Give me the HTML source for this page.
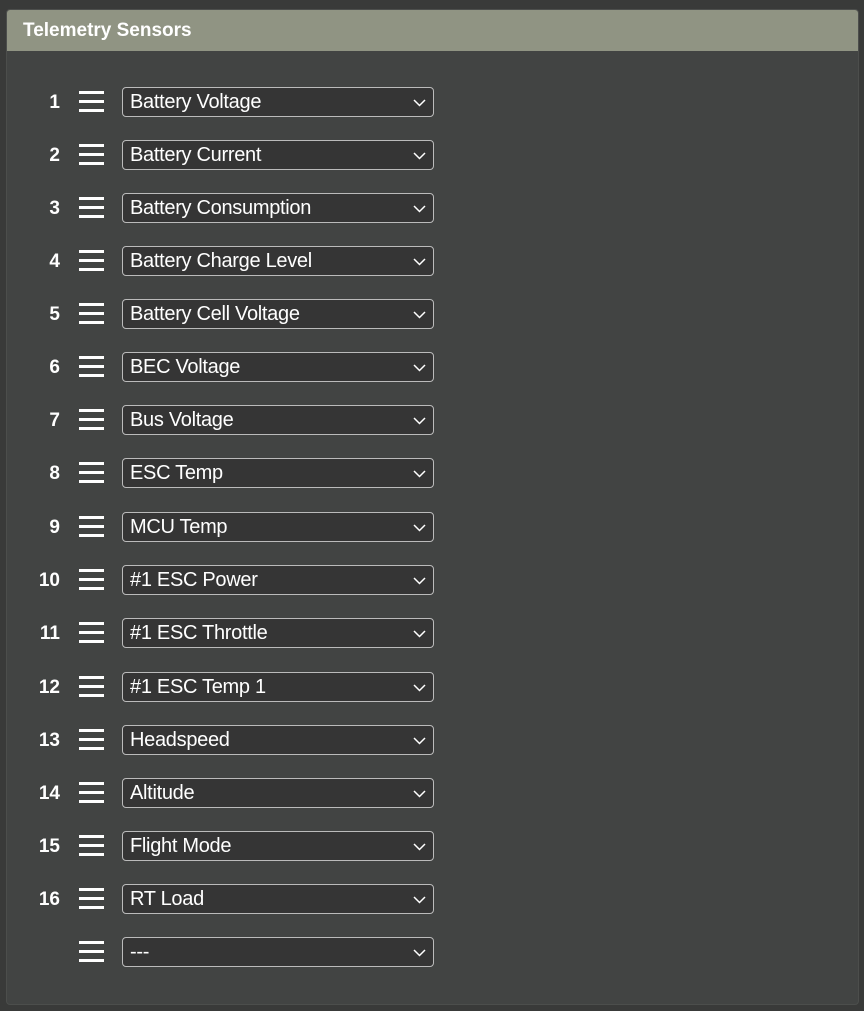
<!DOCTYPE html>
<html><head><style>
html,body{margin:0;padding:0;background:#393a39;width:864px;height:1011px;overflow:hidden;font-family:"Liberation Sans",sans-serif}
.panel{position:absolute;left:6px;top:9px;width:851px;height:994px;background:#424443;border:1px solid #4c4e4c;border-radius:4px;overflow:hidden}
.hdr{height:41px;background:#909483;color:#fff;font-weight:bold;font-size:19px;line-height:41px;padding-left:16px}
.row{position:absolute;left:0;height:30px}
.num{position:absolute;left:0;top:1px;width:53px;text-align:right;color:#fff;font-weight:bold;font-size:19px;line-height:30px}
.ham{position:absolute;left:72px;top:4px;width:25px;height:22px}
.ham i{position:absolute;left:0;width:25px;height:3px;background:#fff}
.sel{position:absolute;left:115px;top:0;width:303px;height:28px;background:#353535;border:1.5px solid #bbb;border-radius:4px;color:#fff;font-size:20px;line-height:29px;padding-left:7px;box-sizing:content-box;letter-spacing:-0.3px}
.sel svg{position:absolute;right:7px;top:11px}
</style></head><body>
<div class="panel"><div class="hdr">Telemetry Sensors</div>
<div class="row" style="top:77px"><div class="num">1</div><div class="ham"><i style="top:0"></i><i style="top:9px"></i><i style="top:18px"></i></div><div class="sel">Battery Voltage<svg width="13" height="8"><path d="M1 1l5.5 5.5L12 1" stroke="#fff" stroke-width="1.5" fill="none"/></svg></div></div>
<div class="row" style="top:130px"><div class="num">2</div><div class="ham"><i style="top:0"></i><i style="top:9px"></i><i style="top:18px"></i></div><div class="sel">Battery Current<svg width="13" height="8"><path d="M1 1l5.5 5.5L12 1" stroke="#fff" stroke-width="1.5" fill="none"/></svg></div></div>
<div class="row" style="top:183px"><div class="num">3</div><div class="ham"><i style="top:0"></i><i style="top:9px"></i><i style="top:18px"></i></div><div class="sel">Battery Consumption<svg width="13" height="8"><path d="M1 1l5.5 5.5L12 1" stroke="#fff" stroke-width="1.5" fill="none"/></svg></div></div>
<div class="row" style="top:236px"><div class="num">4</div><div class="ham"><i style="top:0"></i><i style="top:9px"></i><i style="top:18px"></i></div><div class="sel">Battery Charge Level<svg width="13" height="8"><path d="M1 1l5.5 5.5L12 1" stroke="#fff" stroke-width="1.5" fill="none"/></svg></div></div>
<div class="row" style="top:289px"><div class="num">5</div><div class="ham"><i style="top:0"></i><i style="top:9px"></i><i style="top:18px"></i></div><div class="sel">Battery Cell Voltage<svg width="13" height="8"><path d="M1 1l5.5 5.5L12 1" stroke="#fff" stroke-width="1.5" fill="none"/></svg></div></div>
<div class="row" style="top:342px"><div class="num">6</div><div class="ham"><i style="top:0"></i><i style="top:9px"></i><i style="top:18px"></i></div><div class="sel">BEC Voltage<svg width="13" height="8"><path d="M1 1l5.5 5.5L12 1" stroke="#fff" stroke-width="1.5" fill="none"/></svg></div></div>
<div class="row" style="top:395px"><div class="num">7</div><div class="ham"><i style="top:0"></i><i style="top:9px"></i><i style="top:18px"></i></div><div class="sel">Bus Voltage<svg width="13" height="8"><path d="M1 1l5.5 5.5L12 1" stroke="#fff" stroke-width="1.5" fill="none"/></svg></div></div>
<div class="row" style="top:448px"><div class="num">8</div><div class="ham"><i style="top:0"></i><i style="top:9px"></i><i style="top:18px"></i></div><div class="sel">ESC Temp<svg width="13" height="8"><path d="M1 1l5.5 5.5L12 1" stroke="#fff" stroke-width="1.5" fill="none"/></svg></div></div>
<div class="row" style="top:502px"><div class="num">9</div><div class="ham"><i style="top:0"></i><i style="top:9px"></i><i style="top:18px"></i></div><div class="sel">MCU Temp<svg width="13" height="8"><path d="M1 1l5.5 5.5L12 1" stroke="#fff" stroke-width="1.5" fill="none"/></svg></div></div>
<div class="row" style="top:555px"><div class="num">10</div><div class="ham"><i style="top:0"></i><i style="top:9px"></i><i style="top:18px"></i></div><div class="sel">#1 ESC Power<svg width="13" height="8"><path d="M1 1l5.5 5.5L12 1" stroke="#fff" stroke-width="1.5" fill="none"/></svg></div></div>
<div class="row" style="top:608px"><div class="num">11</div><div class="ham"><i style="top:0"></i><i style="top:9px"></i><i style="top:18px"></i></div><div class="sel">#1 ESC Throttle<svg width="13" height="8"><path d="M1 1l5.5 5.5L12 1" stroke="#fff" stroke-width="1.5" fill="none"/></svg></div></div>
<div class="row" style="top:662px"><div class="num">12</div><div class="ham"><i style="top:0"></i><i style="top:9px"></i><i style="top:18px"></i></div><div class="sel">#1 ESC Temp 1<svg width="13" height="8"><path d="M1 1l5.5 5.5L12 1" stroke="#fff" stroke-width="1.5" fill="none"/></svg></div></div>
<div class="row" style="top:715px"><div class="num">13</div><div class="ham"><i style="top:0"></i><i style="top:9px"></i><i style="top:18px"></i></div><div class="sel">Headspeed<svg width="13" height="8"><path d="M1 1l5.5 5.5L12 1" stroke="#fff" stroke-width="1.5" fill="none"/></svg></div></div>
<div class="row" style="top:768px"><div class="num">14</div><div class="ham"><i style="top:0"></i><i style="top:9px"></i><i style="top:18px"></i></div><div class="sel">Altitude<svg width="13" height="8"><path d="M1 1l5.5 5.5L12 1" stroke="#fff" stroke-width="1.5" fill="none"/></svg></div></div>
<div class="row" style="top:821px"><div class="num">15</div><div class="ham"><i style="top:0"></i><i style="top:9px"></i><i style="top:18px"></i></div><div class="sel">Flight Mode<svg width="13" height="8"><path d="M1 1l5.5 5.5L12 1" stroke="#fff" stroke-width="1.5" fill="none"/></svg></div></div>
<div class="row" style="top:874px"><div class="num">16</div><div class="ham"><i style="top:0"></i><i style="top:9px"></i><i style="top:18px"></i></div><div class="sel">RT Load<svg width="13" height="8"><path d="M1 1l5.5 5.5L12 1" stroke="#fff" stroke-width="1.5" fill="none"/></svg></div></div>
<div class="row" style="top:927px"><div class="num"></div><div class="ham"><i style="top:0"></i><i style="top:9px"></i><i style="top:18px"></i></div><div class="sel">---<svg width="13" height="8"><path d="M1 1l5.5 5.5L12 1" stroke="#fff" stroke-width="1.5" fill="none"/></svg></div></div>
</div>
</body></html>
